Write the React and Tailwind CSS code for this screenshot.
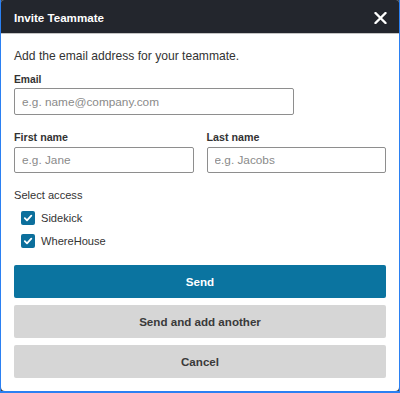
import React, { useState } from 'react';

const font = { fontFamily: '"Liberation Sans", Arial, sans-serif' };

const Check = ({ checked, onClick }) => (
  <button
    onClick={onClick}
    className={`w-[14px] h-[14px] rounded-[2px] flex items-center justify-center ${checked ? 'bg-[#0c6f9c]' : 'border border-[#8c8c8c] bg-white'}`}
  >
    {checked && (
      <svg width="10" height="10" viewBox="0 0 10 10">
        <path d="M1.8 5.2 L4 7.3 L8.3 2.6" fill="none" stroke="white" strokeWidth="1.8" strokeLinecap="round" strokeLinejoin="round" />
      </svg>
    )}
  </button>
);

const App = () => {
  const [access, setAccess] = useState({ sidekick: true, wherehouse: true });

  const toggle = (key) => {
    setAccess({ ...access, [key]: !access[key] });
  };

  return (
    <div style={font} className='w-[400px] h-[393px] bg-[#3a3d42] border-x border-b-2 border-[#2b80f2]'>
      <div className='h-full bg-white rounded-t-[3px] rounded-b-[4px] overflow-hidden flex flex-col'>
        <div className='h-[34px] bg-[#23262d] border-b border-[#c4c4c4] flex items-center justify-between pl-[13px] pr-[12px] pt-[2px] shrink-0'>
          <span className='text-white font-bold text-[11.6px]'>Invite Teammate</span>
          <button>
            <svg width="13" height="12" viewBox="0 0 13 12">
              <path d="M1.5 1 L11.5 11 M11.5 1 L1.5 11" stroke="white" strokeWidth="2.4" strokeLinecap="round" />
            </svg>
          </button>
        </div>

        <div className='px-[13px] flex flex-col text-[#333]'>
          <p className='text-[12.1px] mt-[14px] leading-[16px]'>Add the email address for your teammate.</p>

          <label className='font-bold text-[10.3px] mt-[10px] leading-[12px]'>Email</label>
          <input
            placeholder='e.g. name@company.com'
            className='mt-[2px] w-[280px] h-[27px] border border-[#8e8e8e] rounded-[2px] px-[7px] text-[11.8px] placeholder:text-[#8a8a8a] outline-none'
          />

          <div className='flex gap-[13px] mt-[16px]'>
            <div className='flex flex-col w-[180px]'>
              <label className='font-bold text-[10.7px] leading-[12px]'>First name</label>
              <input
                placeholder='e.g. Jane'
                className='mt-[4px] h-[26px] border border-[#8e8e8e] rounded-[2px] px-[7px] text-[11.8px] placeholder:text-[#8a8a8a] outline-none'
              />
            </div>
            <div className='flex flex-col w-[180px]'>
              <label className='font-bold text-[10.7px] leading-[12px]'>Last name</label>
              <input
                placeholder='e.g. Jacobs'
                className='mt-[4px] h-[26px] border border-[#8e8e8e] rounded-[2px] px-[7px] text-[11.8px] placeholder:text-[#8a8a8a] outline-none'
              />
            </div>
          </div>

          <p className='text-[11.1px] mt-[15px] leading-[14px]'>Select access</p>
          <div className='flex flex-col gap-[9px] mt-[9px] pl-[7px]'>
            <div className='flex items-center gap-[6px] h-[14px]'>
              <Check checked={access.sidekick} onClick={() => toggle('sidekick')} />
              <span className='text-[11.1px] leading-[14px]'>Sidekick</span>
            </div>
            <div className='flex items-center gap-[6px] h-[14px]'>
              <Check checked={access.wherehouse} onClick={() => toggle('wherehouse')} />
              <span className='text-[11.1px] leading-[14px]'>WhereHouse</span>
            </div>
          </div>

          <div className='flex flex-col gap-[7px] mt-[17px]'>
            <button className='h-[33px] rounded-[2px] bg-[#0b74a0] text-white font-bold text-[11.6px]'>Send</button>
            <button className='h-[33px] rounded-[2px] bg-[#d6d6d6] text-[#3a3a3a] font-bold text-[11.6px]'>Send and add another</button>
            <button className='h-[33px] rounded-[2px] bg-[#d6d6d6] text-[#3a3a3a] font-bold text-[11.6px]'>Cancel</button>
          </div>
        </div>
      </div>
    </div>
  );
}

export default App;
